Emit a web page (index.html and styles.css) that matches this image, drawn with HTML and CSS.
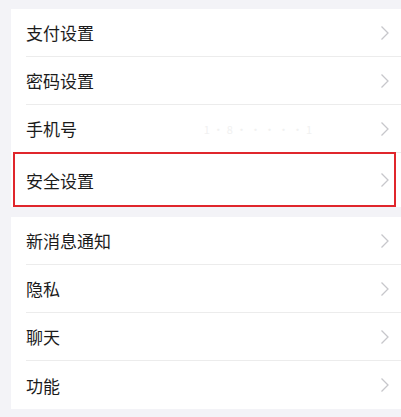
FILE: index.html
```html
<!DOCTYPE html>
<html>
<head>
  <title>设置</title>
  <meta name="viewport" content="width=device-width,initial-scale=1.0">
  <link rel="stylesheet" href="styles.css">
</head>
<body>

  <div class="page">

    <div class="group">
      <div class="row">
        <span class="label">支付设置</span>
        <svg class="arrow" viewBox="0 0 10 16"><path d="M1.5 1.5 L8 8 L1.5 14.5"/></svg>
      </div>
      <div class="row">
        <span class="label">密码设置</span>
        <svg class="arrow" viewBox="0 0 10 16"><path d="M1.5 1.5 L8 8 L1.5 14.5"/></svg>
      </div>
      <div class="row">
        <span class="label">手机号</span>
        <span class="value">1·8·····1</span>
        <svg class="arrow" viewBox="0 0 10 16"><path d="M1.5 1.5 L8 8 L1.5 14.5"/></svg>
      </div>
      <div class="row row-mark">
        <span class="label">安全设置</span>
        <svg class="arrow" viewBox="0 0 10 16"><path d="M1.5 1.5 L8 8 L1.5 14.5"/></svg>
        <div class="mark"></div>
      </div>
    </div>

    <div class="group">
      <div class="row">
        <span class="label">新消息通知</span>
        <svg class="arrow" viewBox="0 0 10 16"><path d="M1.5 1.5 L8 8 L1.5 14.5"/></svg>
      </div>
      <div class="row">
        <span class="label">隐私</span>
        <svg class="arrow" viewBox="0 0 10 16"><path d="M1.5 1.5 L8 8 L1.5 14.5"/></svg>
      </div>
      <div class="row">
        <span class="label">聊天</span>
        <svg class="arrow" viewBox="0 0 10 16"><path d="M1.5 1.5 L8 8 L1.5 14.5"/></svg>
      </div>
      <div class="row">
        <span class="label">功能</span>
        <svg class="arrow" viewBox="0 0 10 16"><path d="M1.5 1.5 L8 8 L1.5 14.5"/></svg>
      </div>
    </div>

  </div>

</body>
</html>
```

FILE: styles.css
```css
body{
  margin: 0;
  background-color: #f3f3f7;
  font-family: "Noto Sans CJK SC", "Noto Sans", sans-serif;
}

.page{
  padding-top: 9px;
  padding-left: 11px;
}

.group{
  background-color: #fff;
  padding-left: 15px;
  margin-bottom: 10px;
}

.row{
  position: relative;
  display: flex;
  align-items: center;
  height: 47px;
  border-bottom: 1px solid #ececec;
  padding-right: 11px;
}

.row:last-child{
  border-bottom: none;
  height: 48px;
}

.row-mark{
  height: 54px !important;
}

.label{
  flex: 1;
  font-size: 17px;
  color: #1b1b1b;
}

/* 模糊的号码 */
.value{
  font-size: 11px;
  color: #f1f1f1;
  margin-right: 65px;
  letter-spacing: 3px;
}

.arrow{
  width: 10px;
  height: 16px;
  fill: none;
  stroke: #c7c7cb;
  stroke-width: 1.3;
}

/* 标注框 */
.mark{
  position: absolute;
  left: -13px;
  right: 5px;
  top: -1px;
  bottom: 0;
  border: 2px solid #e0262c;
}
```
